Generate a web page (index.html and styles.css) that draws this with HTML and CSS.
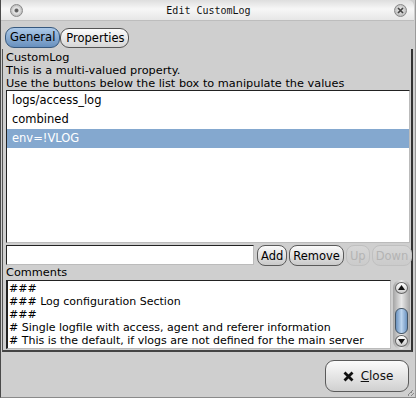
FILE: index.html
```html
<!DOCTYPE html>
<html>
<head>
    <title>Edit CustomLog</title>
    <link rel="stylesheet" href="styles.css">
</head>
<body>
    <div class="window">
        <!-- Title bar with the two round window buttons -->
        <div class="titlebar">
            <span class="wm-btn"></span>
            <span class="title">Edit CustomLog</span>
            <span class="wm-btn wm-close"><svg width="9" height="9" viewBox="0 0 9 9"><path d="M2 2 L7 7 M7 2 L2 7" stroke="#444" stroke-width="1.7"/></svg></span>
        </div>

        <div class="tabs">
            <span class="tab active">General</span>
            <span class="tab">Properties</span>
        </div>

        <div class="panel">
            <div class="desc">
                <div>CustomLog</div>
                <div>This is a multi-valued property.</div>
                <div>Use the buttons below the list box to manipulate the values</div>
            </div>

            <div class="listbox">
                <div class="item">logs/access_log</div>
                <div class="item">combined</div>
                <div class="item selected">env=!VLOG</div>
            </div>

            <div class="entry-row">
                <input type="text" class="entry">
                <button class="pill">Add</button>
                <button class="pill">Remove</button>
                <button class="pill disabled">Up</button>
                <button class="pill disabled">Down</button>
            </div>

            <div class="section-label">Comments</div>

            <div class="comments-row">
                <div class="comments">
                    <div>###</div>
                    <div>### Log configuration Section</div>
                    <div>###</div>
                    <div># Single logfile with access, agent and referer information</div>
                    <div># This is the default, if vlogs are not defined for the main server</div>
                </div>
                <div class="scrollbar">
                    <span class="arrow"><svg width="9" height="9" viewBox="0 0 9 9"><path d="M1 7 L4.5 2 L8 7 Z" fill="#111"/></svg></span>
                    <span class="thumb"></span>
                    <span class="arrow"><svg width="9" height="9" viewBox="0 0 9 9"><path d="M1 2 L4.5 7 L8 2 Z" fill="#111"/></svg></span>
                </div>
            </div>
        </div>

        <div class="footer">
            <button class="close-btn">
                <svg width="11" height="11" viewBox="0 0 11 11"><path d="M1.5 1.5 L9.5 9.5 M9.5 1.5 L1.5 9.5" stroke="#111" stroke-width="2.8"/></svg>
                <span><u>C</u>lose</span>
            </button>
            <!-- resize grip in the corner -->
            <span class="grip"></span>
        </div>
    </div>
</body>
</html>
```

FILE: styles.css
```css
body {
    margin: 0;
    padding: 0;
    background-color: #cfcfcf;
    font-family: 'DejaVu Sans', sans-serif;
    font-size: 11px;
    color: #000;
}

.window {
    width: 416px;
    height: 398px;
    box-sizing: border-box;
    border-left: 1px solid #4a4a4a;
    border-right: 1px solid #9a9a9a;
    border-bottom: 1px solid #8a8a8a;
    background-color: #cfcfcf;
    display: flex;
    flex-direction: column;
}

/* Title bar */
.titlebar {
    height: 20px;
    display: flex;
    align-items: center;
    justify-content: space-between;
    padding: 0 7px 0 9px;
    background: linear-gradient(#dedede, #f7f7f7 45%, #e6e6e6);
    border-bottom: 1px solid #bdbdbd;
    border-radius: 0 6px 0 0;
    margin-right: 1px;
}

.title {
    font-family: 'DejaVu Sans Mono', monospace;
    font-size: 10px;
    color: #111;
    padding-top: 1px;
}

.wm-btn {
    width: 13px;
    height: 13px;
    box-sizing: border-box;
    border-radius: 50%;
    border: 1px solid #888;
    background: radial-gradient(circle at 50% 50%, #555 0, #666 1.5px, #eaeaea 2.5px, #c4c4c4 5px);
    display: flex;
    align-items: center;
    justify-content: center;
}

.wm-close {
    background: radial-gradient(circle at 50% 45%, #f2f2f2 0, #bcbcbc 6px);
}

/* Tabs */
.tabs {
    display: flex;
    padding: 6px 0 0 4px;
}

.tab {
    height: 18px;
    line-height: 18px;
    padding: 0 4px 0 5px;
    font-size: 11.5px;
    border: 1px solid #555;
    border-radius: 9px;
    background: linear-gradient(#fcfcfc, #d6d6d6);
    margin-top: 1px;
    color: #000;
}

.tab.active {
    background: linear-gradient(#acc9e8, #6890be);
    border-color: #36587e;
    margin-top: 0;
    height: 19px;
    padding: 0 4px;
}

/* Main panel */
.panel {
    margin: 1px 2px 0 1px;
    border-left: 1px solid #555;
    border-right: 2px solid #333;
    border-bottom: 2px solid #444;
    display: flex;
    flex-direction: column;
    padding: 0 1px 1px 3px;
}

.desc {
    line-height: 13px;
    font-size: 11.3px;
    padding-top: 2px;
}

.listbox {
    height: 151px;
    background: #fff;
    border: 1px solid #222;
    border-right-color: #bbb;
    border-bottom-color: #bbb;
}

.item {
    height: 19px;
    line-height: 19px;
    padding-left: 5px;
    font-size: 11.5px;
}

.item.selected {
    background-color: #84a8cf;
    color: #fff;
}

.entry-row {
    display: flex;
    align-items: flex-start;
    gap: 2px;
    margin-top: 2px;
}

.entry {
    flex: none;
    width: 248px;
    height: 20px;
    box-sizing: border-box;
    border: 1px solid #222;
    border-right-color: #bbb;
    border-bottom-color: #bbb;
    background: #fff;
    margin: 0 1px 0 0;
}

.pill {
    font-family: 'DejaVu Sans', sans-serif;
    font-size: 11.5px;
    height: 21px;
    padding: 0 3px;
    border: 1px solid #5a5a5a;
    border-radius: 8px;
    background: linear-gradient(#fbfbfb, #c9c9c9);
    color: #000;
}

.pill.disabled {
    color: #b4b4b4;
    border-color: #c0c0c0;
    background: linear-gradient(#d6d6d6, #cbcbcb);
}

.section-label {
    font-size: 11.3px;
    line-height: 13px;
}

.comments-row {
    display: flex;
    gap: 2px;
    margin-top: 1px;
}

.comments {
    flex: 1;
    height: 69px;
    box-sizing: border-box;
    background: #fff;
    border: 1px solid #222;
    border-left-width: 2px;
    border-right-color: #bbb;
    border-bottom-color: #bbb;
    overflow: hidden;
    line-height: 13px;
    font-size: 11px;
    padding: 1px 0 0 1px;
    white-space: nowrap;
}

.scrollbar {
    width: 17px;
    height: 69px;
    border-radius: 8px;
    background: linear-gradient(90deg, #a4a4a4, #e8e8e8 50%, #a4a4a4);
    display: flex;
    flex-direction: column;
    align-items: center;
    padding: 2px 0;
    box-sizing: border-box;
}

.arrow {
    width: 13px;
    height: 13px;
    border-radius: 50%;
    border: 1px solid #666;
    box-sizing: border-box;
    background: linear-gradient(#fff, #ccc);
    display: flex;
    align-items: center;
    justify-content: center;
}

.thumb {
    width: 11px;
    height: 27px;
    margin: 14px 0 1px 0;
    border-radius: 6px;
    border: 1px solid #445566;
    background: linear-gradient(90deg, #6c93c0, #bcd5ef 50%, #6c93c0);
}

/* Footer with the close button */
.footer {
    flex: 1;
    display: flex;
    justify-content: flex-end;
    align-items: flex-start;
    padding: 8px 6px 0 0;
    position: relative;
}

.close-btn {
    width: 84px;
    height: 32px;
    border: 1px solid #5a5a5a;
    border-radius: 9px;
    background: linear-gradient(#fbfbfb, #d0d0d0);
    display: flex;
    align-items: center;
    justify-content: center;
    gap: 7px;
    padding: 0 0 0 2px;
    font-family: 'DejaVu Sans', sans-serif;
    font-size: 12px;
    color: #111;
}

.grip {
    position: absolute;
    right: 1px;
    bottom: 1px;
    width: 6px;
    height: 6px;
    background: linear-gradient(135deg, transparent 40%, #888 40%, #888 50%, transparent 50%, transparent 70%, #888 70%, #888 80%, transparent 80%);
}
```
